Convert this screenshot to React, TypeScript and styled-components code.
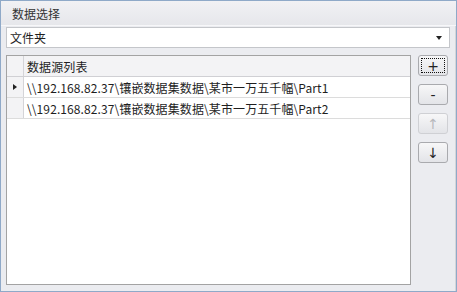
import React from "react";
import styled, { createGlobalStyle } from "styled-components";

const GlobalStyle = createGlobalStyle`
    html, body {
        margin: 0;
        padding: 0;
        background: #ffffff;
    }
    * {
        box-sizing: border-box;
    }
`;

const Frame = styled.div`
    width: 457px;
    height: 292px;
    border: 1px solid #8fa9c8;
    background: #ebecf0;
    font-family: "Noto Sans CJK SC", "Liberation Sans", sans-serif;
    font-size: 12px;
    color: #1e1e1e;
    display: flex;
    flex-direction: column;
`;

const TitleBar = styled.div`
    height: 25px;
    padding: 0 0 0 11px;
    display: flex;
    align-items: center;
    background: linear-gradient(#f1f1f4, #e6e7eb);
    border-bottom: 1px solid #f7f7f9;
    color: #333;
`;

const Body = styled.div`
    flex: 1;
    display: flex;
    flex-direction: column;
    padding: 1px 5px 6px 5px;
    border-right: 1px solid #d4d5d9;
`;

const Combo = styled.div`
    height: 21px;
    background: #fff;
    border: 1px solid #c4c6ca;
    display: flex;
    align-items: center;
    justify-content: space-between;
    padding: 0 7px 0 3px;
`;

const Arrow = styled.span`
    width: 0;
    height: 0;
    border-left: 3.5px solid transparent;
    border-right: 3.5px solid transparent;
    border-top: 4px solid #222;
    margin-top: 1px;
`;

const Main = styled.div`
    flex: 1;
    display: flex;
    gap: 7px;
    margin-top: 7px;
`;

const Grid = styled.div`
    flex: 1;
    background: #fff;
    border: 1px solid #a3a3a3;
    display: flex;
    flex-direction: column;
`;

const Row = styled.div<{ $header?: boolean }>`
    height: 21px;
    display: flex;
    border-bottom: 1px solid ${(p) => (p.$header ? "#d0d0d4" : "#dcdcdc")};
    background: ${(p) => (p.$header ? "#f3f3f5" : "#fff")};
`;

const Indicator = styled.div`
    width: 17px;
    border-right: 1px solid #d4d4d8;
    background: #f3f3f5;
    display: flex;
    align-items: center;
    justify-content: center;
`;

const Caret = styled.span`
    width: 0;
    height: 0;
    border-top: 3px solid transparent;
    border-bottom: 3px solid transparent;
    border-left: 4px solid #222;
`;

const Cell = styled.div`
    flex: 1;
    display: flex;
    align-items: center;
    padding-left: 3px;
    white-space: nowrap;
    color: #1e1e1e;
    letter-spacing: 0.1px;
`;

const Buttons = styled.div`
    width: 30px;
    display: flex;
    flex-direction: column;
    gap: 8px;
    margin-right: 2px;
`;

const SideButton = styled.button<{ $disabled?: boolean; $focus?: boolean }>`
    width: 30px;
    height: 21px;
    padding: 0;
    border: 1px solid ${(p) => (p.$disabled ? "#cfd0d4" : "#a9aaae")};
    border-radius: 3px;
    background: linear-gradient(#f7f7f8, #e3e4e8);
    color: ${(p) => (p.$disabled ? "#b8b9bd" : "#222")};
    font-family: "DejaVu Sans", sans-serif;
    font-size: 14px;
    line-height: 1;
    display: flex;
    align-items: center;
    justify-content: center;
    position: relative;
    &::after {
        content: "";
        display: ${(p) => (p.$focus ? "block" : "none")};
        position: absolute;
        inset: 2px;
        border: 1px dotted #111;
    }
`;

const rows = [
    "\\\\192.168.82.37\\镶嵌数据集数据\\某市一万五千幅\\Part1",
    "\\\\192.168.82.37\\镶嵌数据集数据\\某市一万五千幅\\Part2",
];

export default function App() {
    return (
        <>
            <GlobalStyle />
            <Frame>
                <TitleBar>数据选择</TitleBar>
                <Body>
                    <Combo>
                        <span>文件夹</span>
                        <Arrow />
                    </Combo>
                    <Main>
                        <Grid>
                            <Row $header>
                                <Indicator />
                                <Cell>数据源列表</Cell>
                            </Row>
                            {rows.map((r, i) => (
                                <Row key={i}>
                                    <Indicator>{i === 0 && <Caret />}</Indicator>
                                    <Cell>{r}</Cell>
                                </Row>
                            ))}
                        </Grid>
                        <Buttons>
                            <SideButton $focus>+</SideButton>
                            <SideButton>-</SideButton>
                            <SideButton $disabled>↑</SideButton>
                            <SideButton>↓</SideButton>
                        </Buttons>
                    </Main>
                </Body>
            </Frame>
        </>
    );
}
